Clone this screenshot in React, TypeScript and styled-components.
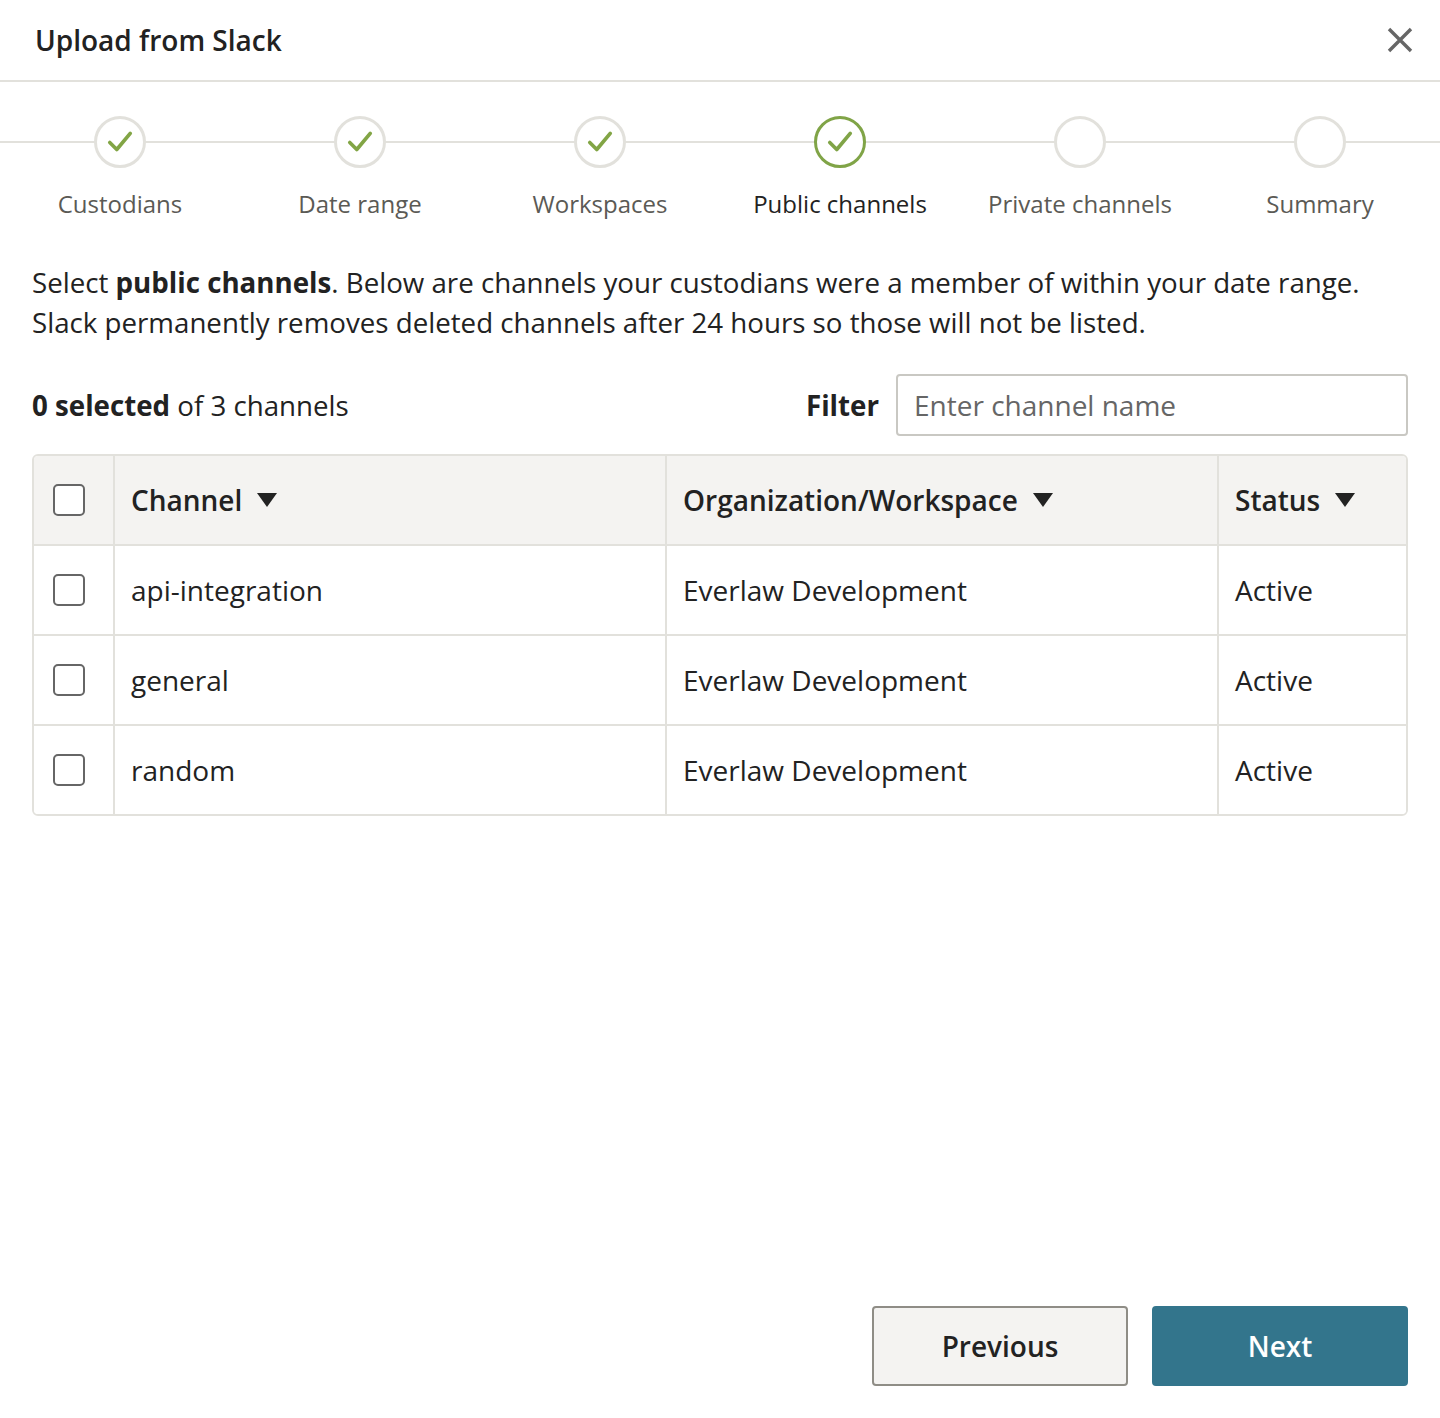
import React from "react";
import styled, { createGlobalStyle } from "styled-components";

const GlobalStyle = createGlobalStyle`
  html, body {
    margin: 0;
    padding: 0;
    background: #fff;
    font-family: "Open Sans", "Noto Sans", sans-serif;
    color: #222;
  }
  * { box-sizing: border-box; }
`;

type StepState = "done" | "current" | "todo";

const steps: { label: string; state: StepState }[] = [
  { label: "Custodians", state: "done" },
  { label: "Date range", state: "done" },
  { label: "Workspaces", state: "done" },
  { label: "Public channels", state: "current" },
  { label: "Private channels", state: "todo" },
  { label: "Summary", state: "todo" },
];

const channels = [
  { name: "api-integration", org: "Everlaw Development", status: "Active" },
  { name: "general", org: "Everlaw Development", status: "Active" },
  { name: "random", org: "Everlaw Development", status: "Active" },
];

const Check = ({ color }: { color: string }) => (
  <svg width="28" height="28" viewBox="0 0 26 26" fill="none">
    <path
      d="M3.5 13.5 L10 20 L22.5 5"
      stroke={color}
      strokeWidth="3.4"
      strokeLinecap="round"
      strokeLinejoin="round"
    />
  </svg>
);

const SortArrow = () => (
  <svg width="22" height="16" viewBox="0 0 22 16">
    <path d="M1 1 H21 L11 15 Z" fill="#222" />
  </svg>
);

export default function App() {
  return (
    <Page>
      <GlobalStyle />
      <Header>
        <Title>Upload from Slack</Title>
        <CloseButton aria-label="Close">
          <svg width="26" height="26" viewBox="0 0 26 26">
            <path
              d="M2 2 L24 24 M24 2 L2 24"
              stroke="#666"
              strokeWidth="3.4"
            />
          </svg>
        </CloseButton>
      </Header>

      <Stepper>
        {steps.map((s) => (
          <Step key={s.label}>
            <CircleRow>
              <Circle $state={s.state}>
                {s.state !== "todo" && (
                  <Check color={s.state === "current" ? "#80a447" : "#82a545"} />
                )}
              </Circle>
            </CircleRow>
            <StepLabel $current={s.state === "current"}>{s.label}</StepLabel>
          </Step>
        ))}
      </Stepper>

      <Body>
        <Intro>
          Select <b>public channels</b>. Below are channels your custodians were
          a member of within your date range.
          <br />
          Slack permanently removes deleted channels after 24 hours so those
          will not be listed.
        </Intro>

        <Toolbar>
          <Count>
            <b>0 selected</b> of 3 channels
          </Count>
          <FilterGroup>
            <FilterLabel>Filter</FilterLabel>
            <FilterInput placeholder="Enter channel name" />
          </FilterGroup>
        </Toolbar>

        <Table>
          <HeadRow>
            <CheckCell>
              <Box />
            </CheckCell>
            <HeadCell>
              Channel <SortArrow />
            </HeadCell>
            <HeadCell>
              Organization/Workspace <SortArrow />
            </HeadCell>
            <HeadCell>
              Status <SortArrow />
            </HeadCell>
          </HeadRow>
          {channels.map((c) => (
            <Row key={c.name}>
              <CheckCell>
                <Box />
              </CheckCell>
              <Cell>{c.name}</Cell>
              <Cell>{c.org}</Cell>
              <Cell>{c.status}</Cell>
            </Row>
          ))}
        </Table>
      </Body>

      <Footer>
        <Button $variant="secondary">Previous</Button>
        <Button $variant="primary">Next</Button>
      </Footer>
    </Page>
  );
}

const Page = styled.div`
  width: 1440px;
  height: 1418px;
  display: flex;
  flex-direction: column;
  background: #fff;
`;

const Header = styled.div`
  height: 82px;
  flex-shrink: 0;
  display: flex;
  align-items: center;
  justify-content: space-between;
  padding: 0 27px 0 35px;
  border-bottom: 2px solid #e2e1dc;
`;

const Title = styled.h1`
  margin: 0;
  font-size: 28px;
  font-weight: 600;
  color: #222;
`;

const CloseButton = styled.button`
  border: none;
  background: none;
  padding: 0;
  width: 26px;
  height: 26px;
  cursor: pointer;
  display: flex;
`;

const Stepper = styled.div`
  display: grid;
  grid-template-columns: repeat(6, 1fr);
  padding-top: 34px;
`;

const Step = styled.div`
  display: flex;
  flex-direction: column;
  align-items: center;
`;

const CircleRow = styled.div`
  width: 100%;
  display: flex;
  justify-content: center;
  background: linear-gradient(#e2e1dc, #e2e1dc) center / 100% 2px no-repeat;
`;

const Circle = styled.div<{ $state: StepState }>`
  width: 52px;
  height: 52px;
  border-radius: 50%;
  background: #fff;
  border: 3px solid ${(p) => (p.$state === "current" ? "#80a447" : "#e2e1dc")};
  display: flex;
  align-items: center;
  justify-content: center;
`;

const StepLabel = styled.div<{ $current: boolean }>`
  margin-top: 18px;
  font-size: 24px;
  line-height: 36px;
  color: ${(p) => (p.$current ? "#222" : "#5b5a55")};
`;

const Body = styled.div`
  flex: 1;
  padding: 0 32px;
`;

const Intro = styled.p`
  margin: 40px 0 0;
  font-size: 27.7px;
  line-height: 40px;
  color: #222;

  b {
    font-weight: 700;
  }
`;

const Toolbar = styled.div`
  margin-top: 32px;
  display: flex;
  align-items: center;
  justify-content: space-between;
`;

const Count = styled.div`
  font-size: 27.7px;
  color: #222;

  b {
    font-weight: 700;
  }
`;

const FilterGroup = styled.div`
  display: flex;
  align-items: center;
  gap: 17px;
`;

const FilterLabel = styled.label`
  font-size: 27.7px;
  font-weight: 700;
  color: #222;
`;

const FilterInput = styled.input`
  width: 512px;
  height: 62px;
  border: 2px solid #c9c8c3;
  border-radius: 4px;
  padding: 0 16px;
  font-family: "Open Sans", sans-serif;
  font-size: 28px;
  color: #222;

  &::placeholder {
    color: #666;
  }
`;

const Table = styled.div`
  margin-top: 18px;
  border: 2px solid #e2e1dc;
  border-radius: 6px;
  overflow: hidden;
`;

const RowBase = styled.div`
  display: grid;
  grid-template-columns: 79px 552px 552px 1fr;
  height: 90px;

  & + & {
    border-top: 2px solid #e2e1dc;
  }

  & > * + * {
    border-left: 2px solid #e2e1dc;
  }
`;

const HeadRow = styled(RowBase)`
  background: #f4f3f1;
  height: 88px;
`;

const Row = styled(RowBase)`
  background: #fff;
`;

const CheckCell = styled.div`
  display: flex;
  align-items: center;
  padding-left: 19px;
`;

const Box = styled.span`
  width: 32px;
  height: 32px;
  border: 2px solid #666;
  border-radius: 5px;
  background: #fff;
`;

const HeadCell = styled.div`
  display: flex;
  align-items: center;
  gap: 14px;
  padding-left: 16px;
  font-size: 28px;
  font-weight: 600;
  color: #222;
`;

const Cell = styled.div`
  display: flex;
  align-items: center;
  padding-left: 16px;
  font-size: 28px;
  color: #222;
`;

const Footer = styled.div`
  display: flex;
  justify-content: flex-end;
  gap: 24px;
  padding: 0 32px 32px;
`;

const Button = styled.button<{ $variant: "primary" | "secondary" }>`
  width: 256px;
  height: 80px;
  border-radius: 4px;
  font-family: "Open Sans", sans-serif;
  font-size: 28px;
  font-weight: 600;
  cursor: pointer;
  border: 2px solid
    ${(p) => (p.$variant === "primary" ? "#33758c" : "#8f8d86")};
  background: ${(p) => (p.$variant === "primary" ? "#33758c" : "#f4f3f1")};
  color: ${(p) => (p.$variant === "primary" ? "#fff" : "#222")};
`;
